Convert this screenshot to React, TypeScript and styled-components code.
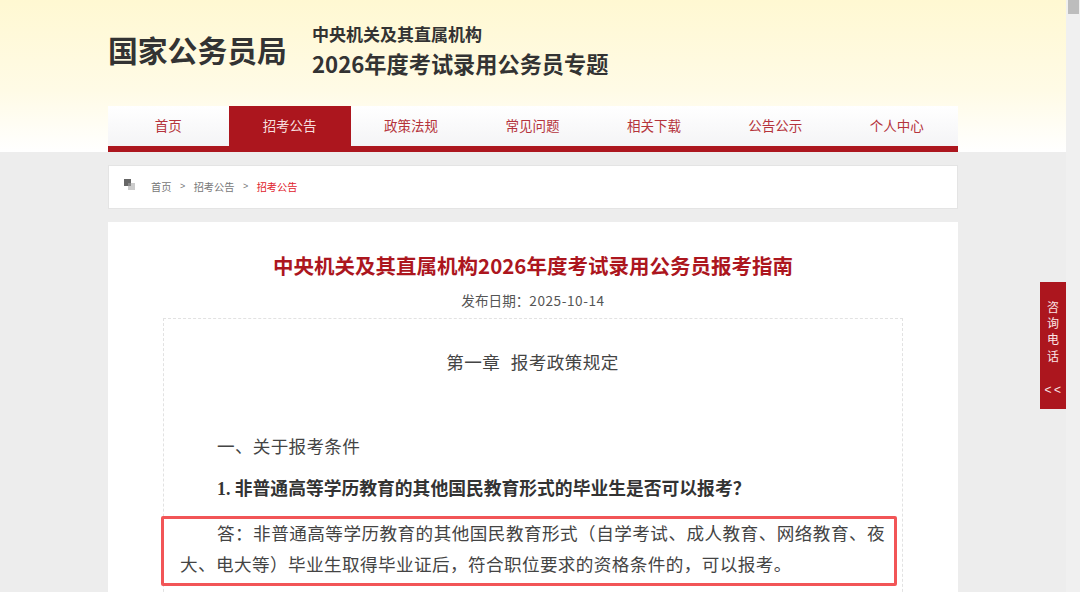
import React from "react";
import styled, { createGlobalStyle } from "styled-components";

const Global = createGlobalStyle`
  html, body { margin: 0; padding: 0; height: 592px; overflow: hidden; background: #ededed; }
  body { font-family: "Noto Sans CJK SC", "Liberation Sans", sans-serif; }
`;
const Page = styled.div`
  width: 1080px; height: 592px; overflow: hidden; position: relative;
  display: flex; background: #ededed;
`;
const Main = styled.div`width: 1066px; flex: none;`;
const ScrollTrack = styled.div`
  width: 14px; flex: none; background: #f0f0f0; display: flex; justify-content: center;
`;
const ScrollThumb = styled.div`width: 11px; height: 14px; background: #bdbdbd;`;
const Header = styled.header`
  height: 152px; padding-left: 108px; box-sizing: border-box;
  background: linear-gradient(180deg, #fff8d2 0%, #fffbe6 60%, #ffffff 100%);
  display: flex; flex-direction: column;
`;
const Brand = styled.div`height: 106px; display: flex; align-items: flex-start;`;
const Agency = styled.div`
  font-size: 29.8px; font-weight: 700; color: #333; line-height: 40px; margin-top: 29px; width: 204px; white-space: nowrap;
`;
const BrandTitles = styled.div`display: flex; flex-direction: column; margin-top: 23px;`;
const BrandSub = styled.div`font-size: 17px; font-weight: 700; color: #333; line-height: 22px;`;
const BrandMain = styled.div`font-size: 22.2px; font-weight: 700; color: #333; line-height: 32px; margin-top: 2px; white-space: nowrap;`;
const Nav = styled.nav`
  width: 850px; height: 46px; display: flex; box-sizing: border-box;
  background: linear-gradient(180deg, #ffffff 0%, #f4f4f6 100%);
  border-bottom: 6px solid #ac161e;
`;
const NavItem = styled.a<{ $active?: boolean }>`
  flex: 1; display: flex; align-items: center; justify-content: center; padding-bottom: 2px; padding-right: 1px;
  font-size: 13.5px; color: ${p => (p.$active ? "#f6dede" : "#b5343c")};
  background: ${p => (p.$active ? "#ac161e" : "transparent")};
`;
const Content = styled.div`
  margin-left: 108px; width: 850px; display: flex; flex-direction: column;
`;
const Crumbs = styled.div`
  margin-top: 13px; height: 44px; box-sizing: border-box; background: #fff;
  border: 1px solid #e4e4e4; display: flex; align-items: center; padding-left: 15px; padding-bottom: 2px; font-size: 10.2px; color: #777;
`;
const CrumbIcon = styled.svg`width: 12px; height: 12px; margin-right: 15px; margin-top: -2px; flex: none;`;
const Sep = styled.span`margin: 0 8.5px; font-family: "Liberation Sans", sans-serif; font-size: 9px;`;
const CrumbCurrent = styled.span`color: #e0222c;`;
const Article = styled.article`
  margin-top: 13px; background: #fff; height: 400px; padding: 0 55px; box-sizing: border-box;
  display: flex; flex-direction: column;
`;
const Title = styled.h1`
  margin: 29px 0 0; font-size: 20.5px; line-height: 28px; font-weight: 700; color: #ac161e; text-align: center; white-space: nowrap;
`;
const DateLine = styled.div`margin-top: 11px; font-size: 13.6px; line-height: 20px; color: #555; text-align: center;`;
const DateValue = styled.span`letter-spacing: 0.55px;`;
const Body = styled.div`
  margin-top: 8px; flex: 1; border: 1px dashed #e2e2e2; border-bottom: 0; padding: 0 17px 0 16px; color: #444;
  position: relative; font-size: 17.6px;
`;
const Chapter = styled.div`margin-top: 28px; line-height: 30px; text-align: center; letter-spacing: 0.4px; word-spacing: 1px;`;
const Section = styled.div`margin-top: 54px; line-height: 30px; text-indent: 37px; letter-spacing: 0.3px;`;
const Question = styled.div`margin-top: 13px; line-height: 30px; text-indent: 37px; font-size: 17.8px; font-weight: 700; color: #333; font-family: "Liberation Serif", "Noto Sans CJK SC", serif; white-space: nowrap;`;
const Answer = styled.p`margin: 13px 0 0; line-height: 31px; text-indent: 37px; text-align: justify; letter-spacing: 0.4px;`;
const Highlight = styled.div`
  position: absolute; left: -3px; top: 197px; width: 736px; height: 70px; box-sizing: border-box;
  border: 3px solid #f25557; border-radius: 2px;
`;
const SideTab = styled.aside`
  position: absolute; left: 1040px; top: 282px; width: 26px; height: 127px; background: #ac161e;
  color: #fbe6e6; font-size: 12px; display: flex; flex-direction: column; align-items: center; padding-top: 17px; box-sizing: border-box; line-height: 16.2px;
`;
const Collapse = styled.div`margin-top: 18px; font-family: "Liberation Sans", sans-serif; font-size: 12px; letter-spacing: 2.5px; padding-left: 2px;`;

const navs = ["首页", "招考公告", "政策法规", "常见问题", "相关下载", "公告公示", "个人中心"];

export default function App() {
  return (
    <Page>
      <Global />
      <Main>
        <Header>
          <Brand>
            <Agency>国家公务员局</Agency>
            <BrandTitles>
              <BrandSub>中央机关及其直属机构</BrandSub>
              <BrandMain>2026年度考试录用公务员专题</BrandMain>
            </BrandTitles>
          </Brand>
          <Nav>
            {navs.map((n, i) => (
              <NavItem key={n} $active={i === 1}>{n}</NavItem>
            ))}
          </Nav>
        </Header>
        <Content>
          <Crumbs>
            <CrumbIcon viewBox="0 0 12 12">
              <rect x="0" y="0" width="7" height="7" fill="#666" />
              <rect x="4" y="4" width="7" height="7" fill="#ccc" />
              <rect x="4" y="4" width="3" height="3" fill="#888" />
            </CrumbIcon>
            <span>首页</span><Sep>&gt;</Sep><span>招考公告</span><Sep>&gt;</Sep><CrumbCurrent>招考公告</CrumbCurrent>
          </Crumbs>
          <Article>
            <Title>中央机关及其直属机构2026年度考试录用公务员报考指南</Title>
            <DateLine>发布日期：<DateValue>2025-10-14</DateValue></DateLine>
            <Body>
              <Chapter>第一章&nbsp;&nbsp;报考政策规定</Chapter>
              <Section>一、关于报考条件</Section>
              <Question>1. 非普通高等学历教育的其他国民教育形式的毕业生是否可以报考？</Question>
              <Answer>答：非普通高等学历教育的其他国民教育形式（自学考试、成人教育、网络教育、夜大、电大等）毕业生取得毕业证后，符合职位要求的资格条件的，可以报考。</Answer>
              <Highlight />
            </Body>
          </Article>
        </Content>
      </Main>
      <ScrollTrack><ScrollThumb /></ScrollTrack>
      <SideTab>
        <span>咨</span><span>询</span><span>电</span><span>话</span>
        <Collapse>&lt;&lt;</Collapse>
      </SideTab>
    </Page>
  );
}
